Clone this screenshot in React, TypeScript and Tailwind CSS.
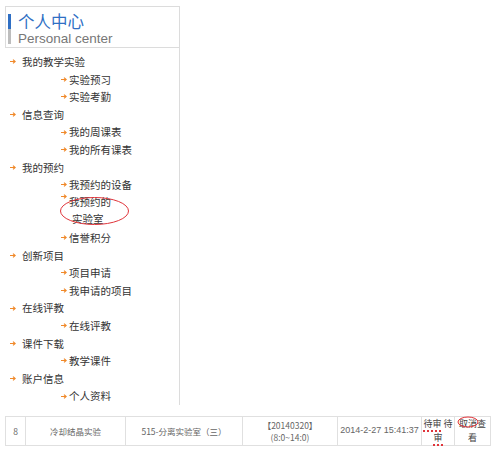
import React from "react";

const Arrow = () => (
  <svg width="6" height="5" viewBox="0 0 6 5" className="shrink-0">
    <path d="M0 2.5H5M3 0.6L5.2 2.5L3 4.4" stroke="#f0892a" strokeWidth="1.2" fill="none" />
  </svg>
);

const Top = ({ t }: { t: string }) => (
  <div className="flex items-center h-[17.6px] pl-[5px] gap-[6px]">
    <Arrow />
    <span>{t}</span>
  </div>
);

const Sub = ({ t }: { t: string }) => (
  <div className="flex items-center h-[17.6px] pl-[56px] gap-[2px]">
    <Arrow />
    <span>{t}</span>
  </div>
);

export default function App() {
  const cjk = { fontFamily: '"Noto Sans CJK SC", "Liberation Sans", sans-serif' };
  return (
    <div className="w-[500px] h-[450px] bg-white relative overflow-hidden" style={cjk}>
      <div className="ml-[5px] mt-[6px] w-[175px] border-r border-[#dcdcdc]">
        <div className="h-[42px] border-t border-l border-b border-[#dcdcdc] flex pl-[2px] pt-[6px] gap-[7px]">
          <div className="flex flex-col w-[3px] mt-[1px]">
            <div className="h-[15px] bg-[#2f6fc4]" />
            <div className="h-[15px] bg-[#bdbdbd]" />
          </div>
          <div className="flex flex-col">
            <div className="text-[16.5px] leading-[17px] text-[#2f6fc4]">个人中心</div>
            <div
              className="text-[13.5px] leading-[15px] mt-[1px] text-[#777]"
              style={{ fontFamily: '"Liberation Sans", Arial, sans-serif' }}
            >
              Personal center
            </div>
          </div>
        </div>
        <div className="pt-[5px] text-[10.5px] text-[#333] leading-[17.6px] relative">
          <Top t="我的教学实验" />
          <Sub t="实验预习" />
          <Sub t="实验考勤" />
          <Top t="信息查询" />
          <Sub t="我的周课表" />
          <Sub t="我的所有课表" />
          <Top t="我的预约" />
          <Sub t="我预约的设备" />
          <div className="flex pl-[56px] gap-[2px] h-[35.2px]">
            <div className="pt-[0px]">
              <Arrow />
            </div>
            <div className="flex flex-col">
              <span className="leading-[15px]">我预约的</span>
              <span className="leading-[20px] pl-[3px]">实验室</span>
            </div>
          </div>
          <Sub t="信誉积分" />
          <Top t="创新项目" />
          <Sub t="项目申请" />
          <Sub t="我申请的项目" />
          <Top t="在线评教" />
          <Sub t="在线评教" />
          <Top t="课件下载" />
          <Sub t="教学课件" />
          <Top t="账户信息" />
          <Sub t="个人资料" />
        </div>
      </div>

      <svg className="absolute left-[59px] top-[196px]" width="71" height="30" viewBox="0 0 71 30">
        <ellipse cx="35.5" cy="15" rx="34" ry="13.5" stroke="#e0343a" strokeWidth="1" fill="none" />
      </svg>

      <div className="ml-[5px] mt-[11px] w-[485px]">
        <table className="border-collapse text-[8.5px] text-[#666] w-[485px] table-fixed">
          <tbody>
            <tr className="h-[27px]">
              <td className="border border-[#e0e0e0] w-[20px] text-center">8</td>
              <td className="border border-[#e0e0e0] w-[100px] text-center">冷却结晶实验</td>
              <td className="border border-[#e0e0e0] w-[117px] text-center">515-分离实验室（三）</td>
              <td className="border border-[#e0e0e0] w-[95px] text-center leading-[12px]">
                【20140320】
                <br />
                (8:0~14:0)
              </td>
              <td
                className="border border-[#e0e0e0] w-[84px] text-center text-[9px] whitespace-nowrap"
                style={{ fontFamily: '"Liberation Sans", Arial, sans-serif' }}
              >
                2014-2-27 15:41:37
              </td>
              <td className="border border-[#e0e0e0] w-[33px] text-center leading-[14px] text-[9px] text-[#444]">
                <span className="border-b-2 border-dotted border-[#e0343a]">待审</span> 待
                <br />
                <span className="border-b-2 border-dotted border-[#e0343a]">审</span>
              </td>
              <td className="border border-[#e0e0e0] w-[36px] text-center leading-[14px] text-[9px] text-[#444]">
                取消查
                <br />
                看
              </td>
            </tr>
          </tbody>
        </table>
      </div>
      <svg className="absolute left-[457px] top-[416px]" width="22" height="12" viewBox="0 0 22 12">
        <ellipse cx="11" cy="6" rx="10" ry="5" stroke="#e0343a" strokeWidth="1" fill="none" />
      </svg>
    </div>
  );
}
